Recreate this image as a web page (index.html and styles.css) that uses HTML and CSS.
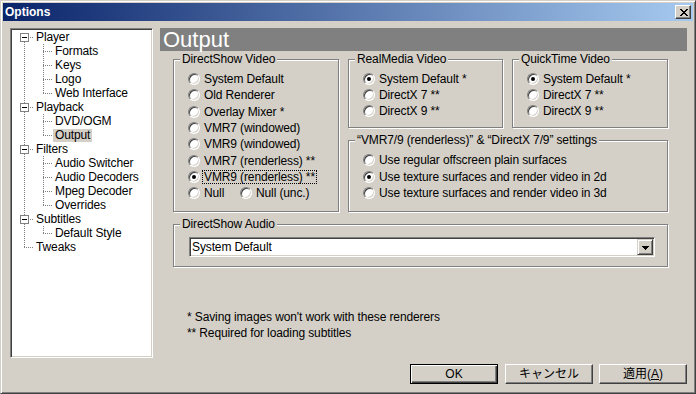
FILE: index.html
```html
<!DOCTYPE html>
<html>
<head>
<meta charset="utf-8">
<title>Options</title>
<link rel="stylesheet" href="styles.css">
</head>
<body>
<div class="window">
  <div class="titlebar">
    <span class="title">Options</span>
    <span class="close"><svg width="8" height="7" viewBox="0 0 8 7"><path d="M0 0h2v1H0zM6 0h2v1H6zM1 1h2v1H1zM5 1h2v1H5zM2 2h4v1H2zM3 3h2v1H3zM2 4h4v1H2zM1 5h2v1H1zM5 5h2v1H5zM0 6h2v1H0zM6 6h2v1H6z" fill="#000"/></svg></span>
  </div>
  <div class="main">
    <div class="tree">
      <div class="trow"><span class="c d h box"><span class="bx"></span></span><span class="tl">Player</span></div>
      <div class="trow"><span class="c v"></span><span class="c v h"></span><span class="tl">Formats</span></div>
      <div class="trow"><span class="c v"></span><span class="c v h"></span><span class="tl">Keys</span></div>
      <div class="trow"><span class="c v"></span><span class="c v h"></span><span class="tl">Logo</span></div>
      <div class="trow"><span class="c v"></span><span class="c u h"></span><span class="tl">Web Interface</span></div>
      <div class="trow"><span class="c v h box"><span class="bx"></span></span><span class="tl">Playback</span></div>
      <div class="trow"><span class="c v"></span><span class="c v h"></span><span class="tl">DVD/OGM</span></div>
      <div class="trow"><span class="c v"></span><span class="c u h"></span><span class="tl sel">Output</span></div>
      <div class="trow"><span class="c v h box"><span class="bx"></span></span><span class="tl">Filters</span></div>
      <div class="trow"><span class="c v"></span><span class="c v h"></span><span class="tl">Audio Switcher</span></div>
      <div class="trow"><span class="c v"></span><span class="c v h"></span><span class="tl">Audio Decoders</span></div>
      <div class="trow"><span class="c v"></span><span class="c v h"></span><span class="tl">Mpeg Decoder</span></div>
      <div class="trow"><span class="c v"></span><span class="c u h"></span><span class="tl">Overrides</span></div>
      <div class="trow"><span class="c v h box"><span class="bx"></span></span><span class="tl">Subtitles</span></div>
      <div class="trow"><span class="c v"></span><span class="c u h"></span><span class="tl">Default Style</span></div>
      <div class="trow"><span class="c u h"></span><span class="tl">Tweaks</span></div>
    </div>
    <div class="panel">
      <div class="header">Output</div>
      <div class="groups">
        <div class="group g-ds">
          <div class="legend">DirectShow Video</div>
          <div class="rows rows-ds">
            <div class="rrow"><span class="radio"></span><span class="lbl">System Default</span></div>
            <div class="rrow"><span class="radio"></span><span class="lbl">Old Renderer</span></div>
            <div class="rrow"><span class="radio"></span><span class="lbl">Overlay Mixer *</span></div>
            <div class="rrow"><span class="radio"></span><span class="lbl">VMR7 (windowed)</span></div>
            <div class="rrow"><span class="radio"></span><span class="lbl">VMR9 (windowed)</span></div>
            <div class="rrow"><span class="radio"></span><span class="lbl">VMR7 (renderless) **</span></div>
            <div class="rrow"><span class="radio on"></span><span class="lbl focus">VMR9 (renderless) **</span></div>
            <div class="rrow"><span class="ritem"><span class="radio"></span><span class="lbl">Null</span></span><span class="radio"></span><span class="lbl">Null (unc.)</span></div>
          </div>
        </div>
        <div class="col-right">
          <div class="pair">
            <div class="group g-rm">
              <div class="legend">RealMedia Video</div>
              <div class="rows">
                <div class="rrow r16"><span class="radio on"></span><span class="lbl">System Default *</span></div>
                <div class="rrow r16"><span class="radio"></span><span class="lbl">DirectX 7 **</span></div>
                <div class="rrow r16"><span class="radio"></span><span class="lbl">DirectX 9 **</span></div>
              </div>
            </div>
            <div class="group g-qt">
              <div class="legend">QuickTime Video</div>
              <div class="rows">
                <div class="rrow r16"><span class="radio on"></span><span class="lbl">System Default *</span></div>
                <div class="rrow r16"><span class="radio"></span><span class="lbl">DirectX 7 **</span></div>
                <div class="rrow r16"><span class="radio"></span><span class="lbl">DirectX 9 **</span></div>
              </div>
            </div>
          </div>
          <div class="group g-vmr">
            <div class="legend">“VMR7/9 (renderless)” &amp; “DirectX 7/9” settings</div>
            <div class="rows">
              <div class="rrow r165"><span class="radio"></span><span class="lbl">Use regular offscreen plain surfaces</span></div>
              <div class="rrow r165"><span class="radio on"></span><span class="lbl">Use texture surfaces and render video in 2d</span></div>
              <div class="rrow r165"><span class="radio"></span><span class="lbl">Use texture surfaces and render video in 3d</span></div>
            </div>
          </div>
        </div>
      </div>
      <div class="group g-audio">
        <div class="legend">DirectShow Audio</div>
        <div class="combo">
          <span class="combo-text">System Default</span>
          <span class="combo-btn"><svg width="7" height="4" viewBox="0 0 7 4"><path d="M0 0h7v1H0zM1 1h5v1H1zM2 2h3v1H2zM3 3h1v1H3z" fill="#000"/></svg></span>
        </div>
      </div>
      <div class="notes">
        <div>* Saving images won't work with these renderers</div>
        <div>** Required for loading subtitles</div>
      </div>
    </div>
  </div>
  <div class="buttons">
    <button class="btn default">OK</button>
    <button class="btn b-cancel">キャンセル</button>
    <button class="btn b-apply">適用(<u>A</u>)</button>
  </div>
</div>
</body>
</html>
```
FILE: styles.css
```css
* { box-sizing: border-box; }
html, body { margin: 0; padding: 0; }
body {
  width: 696px;
  height: 394px;
  overflow: hidden;
  background: #d4d0c8;
  color: #000;
  font-family: "Liberation Sans", Arial, "Noto Sans CJK JP", sans-serif;
  font-size: 12px;
  letter-spacing: -0.12px;
}
.window {
  width: 696px;
  height: 394px;
  background: #d4d0c8;
  border: 1px solid;
  border-color: #d4d0c8 #404040 #404040 #d4d0c8;
  box-shadow: inset 1px 1px 0 #fff, inset -1px -1px 0 #808080;
  padding: 2px;
  display: flex;
  flex-direction: column;
}
.titlebar {
  height: 18px;
  flex: none;
  display: flex;
  align-items: center;
  padding: 0 2px;
  background: linear-gradient(to right, #0a246a, #a6caf0);
  color: #fff;
  font-weight: bold;
  font-size: 12px;
  letter-spacing: 0;
}
.close {
  margin-left: auto;
  width: 16px;
  height: 14px;
  display: flex;
  align-items: center;
  justify-content: center;
  padding: 0 0 0 1px;
  background: #d4d0c8;
  border: 1px solid;
  border-color: #fff #404040 #404040 #fff;
  box-shadow: inset -1px -1px 0 #808080;
}
.close svg { display: block; }

.main {
  display: flex;
  gap: 7px;
  height: 330px;
  margin: 7px 0 0 7px;
  flex: none;
}
.tree {
  width: 143px;
  height: 330px;
  background: #fff;
  border: 1px solid;
  border-color: #808080 #fff #fff #808080;
  box-shadow: inset 1px 1px 0 #404040, inset -1px -1px 0 #d4d0c8;
  padding: 1px 0 0 4px;
}
.trow {
  display: flex;
  align-items: center;
  height: 14px;
}
.c {
  position: relative;
  flex: none;
  width: 19px;
  height: 14px;
}
.v::before, .u::before, .d::before {
  content: "";
  position: absolute;
  left: 9px;
  top: 0;
  width: 1px;
  height: 14px;
  background: repeating-linear-gradient(to bottom, #808080 0 1px, transparent 1px 2px);
}
.u::before { height: 8px; }
.d::before { top: 8px; height: 6px; }
.h::after {
  content: "";
  position: absolute;
  left: 9px;
  top: 7px;
  width: 10px;
  height: 1px;
  background: repeating-linear-gradient(to right, #808080 0 1px, transparent 1px 2px);
}
.bx {
  position: absolute;
  left: 5px;
  top: 3px;
  width: 9px;
  height: 9px;
  border: 1px solid #808080;
  background: #fff;
  z-index: 1;
}
.bx::after {
  content: "";
  position: absolute;
  left: 1px;
  top: 3px;
  width: 5px;
  height: 1px;
  background: #000;
}
.tl {
  line-height: 13px;
  padding: 0 2px;
  white-space: nowrap;
}
.tl.sel { background: #d4d0c8; }

.panel {
  width: 527px;
  display: flex;
  flex-direction: column;
}
.header {
  height: 23px;
  background: #808080;
  color: #fff;
  font-size: 22px;
  line-height: 23px;
  padding-left: 3px;
  letter-spacing: 0;
}
.groups {
  display: flex;
  margin: 8px 0 0 13px;
}
.group {
  border: 1px solid #808080;
  box-shadow: inset 1px 1px 0 #fff, 1px 1px 0 #fff;
}
.legend {
  width: max-content;
  height: 13px;
  line-height: 13px;
  margin: -7px 0 0 6px;
  padding: 0 2px;
  background: #d4d0c8;
  white-space: nowrap;
}
.g-ds { width: 166px; height: 153px; }
.col-right { margin-left: 9px; }
.pair { display: flex; }
.g-rm { width: 155px; height: 69px; }
.g-qt { width: 156px; height: 69px; margin-left: 9px; }
.g-vmr { width: 320px; height: 72px; margin-top: 12px; }
.rows { padding: 5px 0 0 14px; }
.rrow {
  display: flex;
  align-items: center;
  height: 16.3px;
  white-space: nowrap;
}
.rrow.r16 { height: 16px; }
.rrow.r165 { height: 16.5px; }
.ritem {
  display: flex;
  align-items: center;
  width: 52px;
}
.radio {
  position: relative;
  flex: none;
  width: 12px;
  height: 12px;
  border-radius: 50%;
  background: #fff;
  border: 1px solid;
  border-color: #808080 #fff #fff #808080;
  box-shadow: inset 1px 1px 0 #404040, inset -1px -1px 0 #d4d0c8;
  margin-right: 3px;
}
.radio.on::after {
  content: "";
  position: absolute;
  left: 3px;
  top: 3px;
  width: 4px;
  height: 4px;
  border-radius: 50%;
  background: #000;
}
.lbl {
  line-height: 12px;
  padding: 0 1px;
}
.lbl.focus { outline: 1px dotted #000; }

.g-audio {
  width: 495px;
  height: 43px;
  margin: 12px 0 0 13px;
}
.combo {
  width: 466px;
  height: 20px;
  margin: 6px 0 0 15px;
  display: flex;
  background: #fff;
  border: 1px solid;
  border-color: #808080 #fff #fff #808080;
  box-shadow: inset 1px 1px 0 #404040, inset -1px -1px 0 #d4d0c8;
  padding: 1px;
}
.combo-text {
  flex: 1;
  line-height: 16px;
  padding-left: 1px;
}
.combo-btn {
  width: 16px;
  height: 16px;
  display: flex;
  align-items: center;
  justify-content: center;
  background: #d4d0c8;
  border: 1px solid;
  border-color: #d4d0c8 #404040 #404040 #d4d0c8;
  box-shadow: inset 1px 1px 0 #fff, inset -1px -1px 0 #808080;
  padding-top: 1px;
}
.combo-btn svg { display: block; }
.notes {
  margin: 42px 0 0 27px;
  line-height: 16px;
}

.buttons {
  display: flex;
  justify-content: flex-end;
  margin-top: 6px;
  padding-right: 6px;
}
.btn {
  width: 88px;
  height: 20px;
  padding: 0;
  margin: 0;
  font-family: "Liberation Sans", Arial, "Noto Sans CJK JP", sans-serif;
  font-size: 12px;
  line-height: 16px;
  letter-spacing: 0;
  color: #000;
  background: #d4d0c8;
  border: 1px solid;
  border-color: #fff #404040 #404040 #fff;
  box-shadow: inset -1px -1px 0 #808080;
}
.btn.default {
  border-color: #000;
  box-shadow: inset 1px 1px 0 #fff, inset -1px -1px 0 #404040, inset -2px -2px 0 #808080;
}
.b-cancel { margin-left: 7px; }
.b-apply { margin-left: 6px; }
```
